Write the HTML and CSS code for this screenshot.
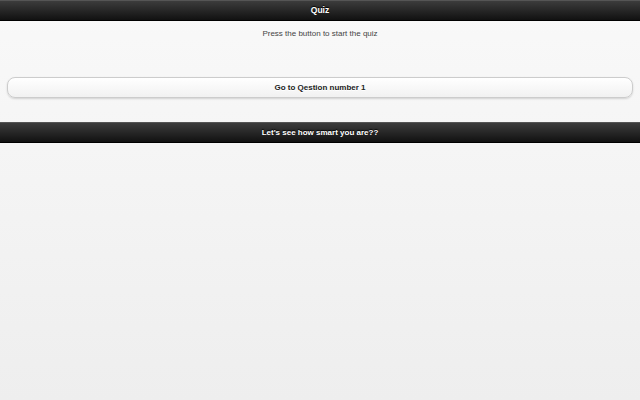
FILE: index.html
```html
<!DOCTYPE html>
<html>
<head>
<meta charset="utf-8">
<link rel="stylesheet" href="styles.css">
</head>
<body>
<div class="page">
  <div class="bar header"><h1>Quiz</h1></div>
  <div class="content">
    <p class="intro">Press the button to start the quiz</p>
    <a class="btn">Go to Qestion number 1</a>
  </div>
  <div class="bar footer"><h2>Let's see how smart you are??</h2></div>
</div>
</body>
</html>
```
FILE: styles.css
```css
html, body { margin: 0; padding: 0; height: 100%; }
body {
  font-family: "Liberation Sans", Arial, sans-serif;
  background: linear-gradient(#f9f9f9, #eeeeee);
}
.page { min-height: 400px; }
.bar {
  background: linear-gradient(#3c3c3c, #111111);
  border-top: 1px solid #555;
  border-bottom: 1px solid #000;
  color: #fff;
  text-align: center;
  text-shadow: 0 -1px 1px #000;
}
.bar h1, .bar h2 {
  margin: 0;
  font-size: 8.5px;
  font-weight: bold;
  line-height: 19px;
}
.bar h2 { font-size: 8px; }
.content { padding: 7px 7px 24px; }
.intro {
  margin: 0;
  padding-top: 1px;
  text-align: center;
  font-size: 8px;
  color: #444;
  line-height: 10px;
}
.btn {
  display: block;
  margin-top: 38px;
  height: 19px;
  line-height: 19px;
  text-align: center;
  font-size: 8px;
  font-weight: bold;
  color: #222;
  background: linear-gradient(#ffffff, #f1f1f1);
  border: 1px solid #ccc;
  border-radius: 8px;
  box-shadow: 0 1px 2px rgba(0,0,0,0.15);
  text-shadow: 0 1px 0 #fff;
}
```
